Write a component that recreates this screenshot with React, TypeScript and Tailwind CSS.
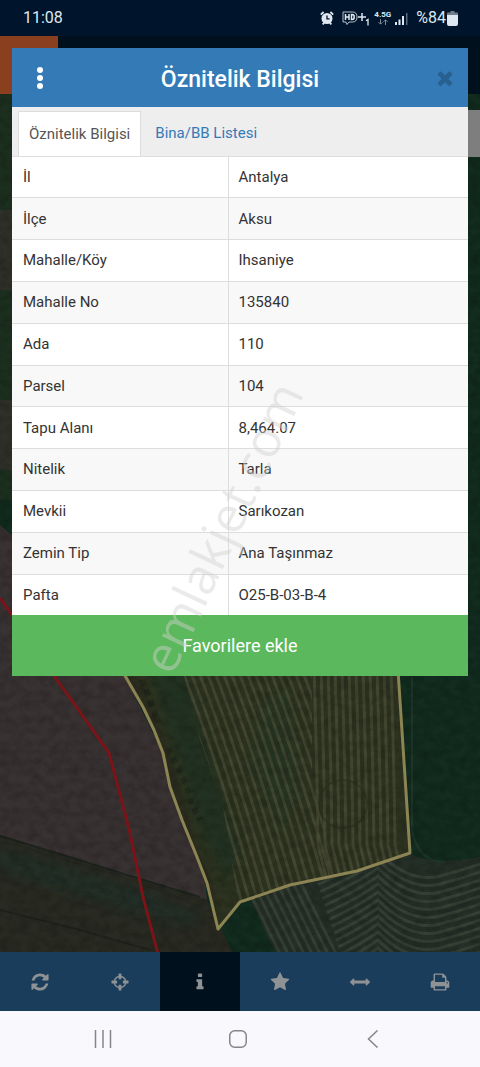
import { useState } from "react";
import { clsx } from "clsx";

type IconProps = { d: string; className?: string };

const ICONS = {
  refresh:
    "M1639 1056q0 5-1 7-64 268-268 434.5t-478 166.5q-146 0-282.5-55t-243.5-157l-129 129q-19 19-45 19t-45-19-19-45v-448q0-26 19-45t45-19h448q26 0 45 19t19 45-19 45l-137 137q71 66 161 102t187 36q134 0 250-65t186-179q11-17 53-117 8-23 30-23h192q13 0 22.5 9.5t9.5 22.5zm25-800v448q0 26-19 45t-45 19h-448q-26 0-45-19t-19-45 19-45l138-138q-148-137-349-137-134 0-250 65t-186 179q-11 17-53 117-8 23-30 23h-199q-13 0-22.5-9.5t-9.5-22.5v-7q65-268 270-434.5t480-166.5q146 0 284 55.5t245 156.5l130-129q19-19 45-19t45 19 19 45z",
  crosshairs:
    "M1325 1024h-109q-26 0-45-19t-19-45v-128q0-26 19-45t45-19h109q-32-108-112.5-188.5t-188.5-112.5v109q0 26-19 45t-45 19h-128q-26 0-45-19t-19-45v-109q-108 32-188.5 112.5t-112.5 188.5h109q26 0 45 19t19 45v128q0 26-19 45t-45 19h-109q32 108 112.5 188.5t188.5 112.5v-109q0-26 19-45t45-19h128q26 0 45 19t19 45v109q108-32 188.5-112.5t112.5-188.5zm339-192v128q0 26-19 45t-45 19h-143q-37 161-154.5 278.5t-278.5 154.5v143q0 26-19 45t-45 19h-128q-26 0-45-19t-19-45v-143q-161-37-278.5-154.5t-154.5-278.5h-143q-26 0-45-19t-19-45v-128q0-26 19-45t45-19h143q37-161 154.5-278.5t278.5-154.5v-143q0-26 19-45t45-19h128q26 0 45 19t19 45v143q161 37 278.5 154.5t154.5 278.5h143q26 0 45 19t19 45z",
  info: "M1216 1344v128q0 26-19 45t-45 19h-512q-26 0-45-19t-19-45v-128q0-26 19-45t45-19h64v-384h-64q-26 0-45-19t-19-45v-128q0-26 19-45t45-19h384q26 0 45 19t19 45v576h64q26 0 45 19t19 45zm-128-1152v192q0 26-19 45t-45 19h-256q-26 0-45-19t-19-45v-192q0-26 19-45t45-19h256q26 0 45 19t19 45z",
  star: "M1728 647q0 22-26 48l-363 354 86 500q1 7 1 20 0 21-10.5 35.5t-30.5 14.5q-19 0-40-12l-449-236-449 236q-22 12-40 12-21 0-31.5-14.5t-10.5-35.5q0-6 2-20l86-500-364-354q-25-27-25-48 0-37 56-46l502-73 225-455q19-41 49-41t49 41l225 455 502 73q56 9 56 46z",
  arrows:
    "M1792 896q0 26-19 45l-256 256q-19 19-45 19t-45-19-19-45v-128h-1024v128q0 26-19 45t-45 19-45-19l-256-256q-19-19-19-45t19-45l256-256q19-19 45-19t45 19 19 45v128h1024v-128q0-26 19-45t45-19 45 19l256 256q19 19 19 45z",
  print:
    "M448 1536h896v-256h-896v256zm0-640h896v-384h-160q-40 0-68-28t-28-68v-160h-640v640zm1152 64q0-26-19-45t-45-19-45 19-19 45 19 45 45 19 45-19 19-45zm128 0v416q0 13-9.5 22.5t-22.5 9.5h-224v160q0 40-28 68t-68 28h-960q-40 0-68-28t-28-68v-160h-224q-13 0-22.5-9.5t-9.5-22.5v-416q0-79 56.5-135.5t135.5-56.5h64v-544q0-40 28-68t68-28h672q40 0 88 20t76 48l152 152q28 28 48 76t20 88v256h64q79 0 135.5 56.5t56.5 135.5z",
  times:
    "M1490 1322q0 40-28 68l-136 136q-28 28-68 28t-68-28l-294-294-294 294q-28 28-68 28t-68-28l-136-136q-28-28-28-68t28-68l294-294-294-294q-28-28-28-68t28-68l136-136q28-28 68-28t68 28l294 294 294-294q28-28 68-28t68 28l136 136q28 28 28 68t-28 68l-294 294 294 294q28 28 28 68z",
};

const ROWS: [string, string][] = [
  ["İl", "Antalya"],
  ["İlçe", "Aksu"],
  ["Mahalle/Köy", "Ihsaniye"],
  ["Mahalle No", "135840"],
  ["Ada", "110"],
  ["Parsel", "104"],
  ["Tapu Alanı", "8,464.07"],
  ["Nitelik", "Tarla"],
  ["Mevkii", "Sarıkozan"],
  ["Zemin Tip", "Ana Taşınmaz"],
  ["Pafta", "O25-B-03-B-4"],
];

const TOOLS = [
  { id: "refresh", label: "Yenile", d: ICONS.refresh },
  { id: "locate", label: "Konumum", d: ICONS.crosshairs },
  { id: "info", label: "Bilgi", d: ICONS.info },
  { id: "favorites", label: "Favoriler", d: ICONS.star },
  { id: "measure", label: "Ölçüm", d: ICONS.arrows },
  { id: "print", label: "Yazdır", d: ICONS.print },
];

function Icon({ d, className }: IconProps) {
  return (
    <svg viewBox="0 0 1792 1792" fill="currentColor" className={className} aria-hidden="true">
      <path d={d} />
    </svg>
  );
}

function StatusBar() {
  return (
    <header className="flex h-9 items-center justify-between bg-[#00152b] pr-[22px] pl-[23px] text-[#dfe8f0]">
      <span className="text-base">11:08</span>
      <div className="flex items-center gap-1">
        <svg width="14" height="14" viewBox="0 0 14 14" aria-hidden="true">
          <circle cx="7" cy="7.5" r="5.5" fill="currentColor" />
          <path
            d="M.8 3.6 3.6 1M13.2 3.6 10.4 1M2.6 13.4l1.6-1.6M11.4 13.4l-1.6-1.6"
            stroke="currentColor"
            strokeWidth="1.8"
          />
          <path d="M7 4.4v3.4h2.6" fill="none" stroke="#00152b" strokeWidth="1.3" />
        </svg>
        <svg width="28" height="16" viewBox="0 0 28 16" className="ml-1" aria-hidden="true">
          <path
            d="M4 12H1V2h9.500q4.500 0 4.500 5t-4.500 5H7l-2 2.500z"
            fill="none"
            stroke="currentColor"
            strokeWidth="1"
            opacity=".8"
          />
          <g fill="none" stroke="currentColor" strokeWidth="1.5">
            <path d="M3.500 4v6M7 4v6M3.500 7H7M9.500 4.500v5h.7q2 0 2-2.500t-2-2.500z" />
            <path d="M20 3v8M16 7h8" />
            <path d="M24 10.800l2-1.300v6" strokeWidth="1.300" />
          </g>
        </svg>
        <div className="flex flex-col items-center">
          <span className="text-[8px] leading-[8px] font-bold">4.5G</span>
          <svg width="10" height="6" viewBox="0 0 10 6" className="opacity-60" aria-hidden="true">
            <path
              d="M2.500 0v5M.5 3.200l2 2 2-2M7.500 6V1M5.500 2.800l2-2 2 2"
              fill="none"
              stroke="currentColor"
              strokeWidth=".9"
            />
          </svg>
        </div>
        <svg width="13" height="13" viewBox="0 0 13 13" aria-hidden="true">
          <path d="M0 10h2v3H0zM3.500 7.500h2V13h-2zM7 4h2v9H7z" fill="currentColor" />
          <path d="M11 1h1.500v12H11z" fill="currentColor" opacity=".4" />
        </svg>
        <div className="ml-1 flex items-center gap-px">
          <span className="text-base">%84</span>
          <svg width="11" height="15" viewBox="0 0 11 15" aria-hidden="true">
            <path d="M3.500 0h4v1.500H10q1 0 1 1V4.500H0V2.500q0-1 1-1h2.500z" fill="currentColor" opacity=".5" />
            <path d="M0 4h11v9q0 2-2 2H2q-2 0-2-2z" fill="currentColor" />
          </svg>
        </div>
      </div>
    </header>
  );
}

/* Furrow lines of the parcel: the left half runs diagonally, the right half is nearly vertical. */
const DIAGONAL = Array.from({ length: 30 }, (_, i) => 90 + i * 8);
const VERTICAL = Array.from({ length: 12 }, (_, i) => 314 + i * 7);
const CURVED = Array.from({ length: 15 }, (_, i) => i * 8);
const LOWER = Array.from({ length: 8 }, (_, i) => 246 + i * 8);

const PARCEL =
  "M125 677 143 707 154 730 163 753 170 787 182 820 197 857 207 883 218 930 240 902 290 885 357 871 410 853 398 677 390 560 60 560z";

function SatelliteMap() {
  return (
    <svg
      viewBox="0 94 480 858"
      preserveAspectRatio="xMidYMax slice"
      className="absolute inset-0 size-full"
      aria-hidden="true"
    >
      <defs>
        <filter id="grain" x="0" y="0" width="100%" height="100%">
          <feTurbulence type="fractalNoise" baseFrequency=".1 .12" numOctaves="4" seed="7" />
          <feColorMatrix values="0 0 0 0 0  0 0 0 0 0  0 0 0 0 0  1.2 0 0 0 -.4" />
        </filter>
        <filter id="soft">
          <feGaussianBlur stdDeviation="5" />
        </filter>
        <clipPath id="parcel">
          <path d={PARCEL} />
        </clipPath>
        <clipPath id="diagonal">
          <path d="M180 660H312V780L330 853V900H238L222 800 200 740z" />
        </clipPath>
        <clipPath id="south">
          <path d="M250 899 290 885 357 871 410 853Q425 866 480 857V952H275z" />
        </clipPath>
        <clipPath id="south-east">
          <path d="M310 860H480V952H340z" />
        </clipPath>
      </defs>

      <path d="M0 94H480V952H0z" fill="#122c1f" />
      <path d="M0 94H12V500H0z" fill="#1d3020" />
      <path d="M0 210H12V290H0zM0 400H12V470H0z" fill="#30302a" />
      <path d="M0 525 40 560 125 677 163 753 205 880 207 900 130 878 0 836z" fill="#393232" />
      <path d="M0 836 130 878 207 900 232 952H0z" fill="#292b22" />
      <path d="M0 848 125 885 200 915 190 925 110 905 0 870z" fill="#202d25" filter="url(#soft)" />
      <path d="M0 836 60 854 130 876 200 897" fill="none" stroke="#1d231d" strokeWidth="2" />
      <path d="M0 910 80 930 150 950" fill="none" stroke="#20231c" strokeWidth="2" />

      <path d={PARCEL} fill="#2d3320" />
      <g clipPath="url(#parcel)">
        <path d="M150 670H185L210 760 240 850 228 880 205 840z" fill="#223320" filter="url(#soft)" />
        <path d="M125 677H140L165 740 195 840 222 910 205 890 170 780z" fill="#2b2d1f" />
        <path d="M260 700 290 690 300 790 280 830 250 770z" fill="#283520" filter="url(#soft)" />
        <g clipPath="url(#diagonal)" fill="none" stroke="#4d4f38" strokeWidth="3" opacity=".7">
          {DIAGONAL.map((x) => (
            <path key={x} d={`M${x} 660Q${x + 40} 760 ${x + 82} 910`} />
          ))}
        </g>
        <g fill="none" stroke="#4d4f38" strokeWidth="3" opacity=".7">
          {VERTICAL.map((x) => (
            <path key={x} d={`M${x} 670Q${x + 3} 760 ${x + 4} 845l10 40`} />
          ))}
        </g>
        <circle cx="343" cy="804" r="24" fill="none" stroke="#28301e" strokeWidth="2" opacity=".6" />
        <path
          d="M142 680 150 700 158 722M168 748 176 764 186 784 192 806 200 820"
          fill="none"
          stroke="#1b2017"
          strokeWidth="6"
          strokeDasharray="6 5"
          opacity=".5"
        />
      </g>

      <path d="M250 899 290 885 357 871 410 853Q425 866 480 857V952H275z" fill="#242f27" />
      <g clipPath="url(#south)" fill="none" stroke="#3f483d" strokeWidth="3" opacity=".7">
        <g clipPath="url(#south-east)">
          {CURVED.map((y) => (
            <path
              key={y}
              d={`M300 ${892 + y}Q350 ${872 + y} 378 ${852 + y}Q410 ${884 + y} 440 ${876 + y}T480 ${864 + y}`}
            />
          ))}
        </g>
        {LOWER.map((x) => (
          <path key={x} d={`M${x} 885 ${x + 38} 962`} />
        ))}
      </g>
      <path d="M412 677V830Q418 862 445 862" fill="none" stroke="#203629" strokeWidth="2" />

      <path d="M0 94H480V952H0z" filter="url(#grain)" opacity=".3" />

      <path
        d="M0 598 12 615 55 677 109 753 130 833 143 897 158 954"
        fill="none"
        stroke="#7b1418"
        strokeWidth="3"
      />
      <path
        d="M120 667 143 707 154 730 163 753 170 787 182 820 197 857 207 883 218 929 240 902 290 885 357 871 410 853 398 670"
        fill="none"
        stroke="#8c8453"
        strokeWidth="3"
        strokeLinejoin="round"
      />
    </svg>
  );
}

function AttributeDialog() {
  const [tab, setTab] = useState<"info" | "units">("info");
  const tabClass = (active: boolean) =>
    clsx(
      "px-[10px] text-[15px]",
      active ? "border-x border-t border-[#ddd] bg-white text-[#555]" : "ml-1 text-[#337ab7]",
    );

  return (
    <section role="dialog" aria-label="Öznitelik Bilgisi" className="absolute inset-x-3 top-12 bg-white">
      <div className="flex h-[59px] items-center justify-between bg-[#337ab7] px-3 text-white">
        <button type="button" aria-label="Menü" className="flex w-8 justify-center">
          <svg width="8" height="24" viewBox="0 0 8 24" fill="currentColor" aria-hidden="true">
            <circle cx="4" cy="4" r="3" />
            <circle cx="4" cy="12" r="3" />
            <circle cx="4" cy="20" r="3" />
          </svg>
        </button>
        <h1 className="pt-1 text-[23px] leading-8 font-medium">Öznitelik Bilgisi</h1>
        <button type="button" aria-label="Kapat" className="flex w-8 justify-end text-[#28608f]">
          <Icon d={ICONS.times} className="size-[22px]" />
        </button>
      </div>

      <div role="tablist" className="flex h-[50px] border-b border-[#ddd] bg-[#eee] pt-1 pl-[6px]">
        <button
          type="button"
          role="tab"
          aria-selected={tab === "info"}
          onClick={() => setTab("info")}
          className={tabClass(tab === "info")}
        >
          Öznitelik Bilgisi
        </button>
        <button
          type="button"
          role="tab"
          aria-selected={tab === "units"}
          onClick={() => setTab("units")}
          className={tabClass(tab === "units")}
        >
          Bina/BB Listesi
        </button>
      </div>

      <table className="h-[458px] w-full table-fixed border-collapse text-left text-[15px] text-[#333]">
        <colgroup>
          <col className="w-[216px]" />
          <col />
        </colgroup>
        <tbody>
          {ROWS.map(([label, value]) => (
            <tr key={label} className="border-t border-[#ddd] first:border-t-0 even:bg-[#f8f8f8]">
              <th scope="row" className="border-r border-[#ddd] px-[11px] font-normal">
                {label}
              </th>
              <td className="px-[10px]">{value}</td>
            </tr>
          ))}
        </tbody>
      </table>

      <button type="button" className="h-[61px] w-full bg-[#5cb85c] text-lg text-white">
        Favorilere ekle
      </button>

      <div className="pointer-events-none absolute inset-0 flex items-end justify-center">
        <span className="mr-9 mb-[122px] -rotate-65 font-['Open_Sans',sans-serif] text-[50px] leading-[54px] text-[#d0d0d0]/45">
          emlakjet.com
        </span>
      </div>
    </section>
  );
}

export default function App() {
  const [activeTool, setActiveTool] = useState("info");

  return (
    <div className="relative flex min-h-screen flex-col bg-[#000f1c] font-[Roboto,sans-serif]">
      <StatusBar />
      <div className="h-[58px] bg-[#00101c]">
        <div className="h-full w-[58px] bg-[#8a401f]" />
      </div>

      <main className="relative flex-1 overflow-hidden">
        <SatelliteMap />
        <div className="absolute top-4 right-0 h-[47px] w-14 bg-[#7e7e7e]" />
      </main>

      <nav aria-label="Harita araçları" className="flex h-[59px] bg-[#1a3d5c]">
        {TOOLS.map((tool) => (
          <button
            key={tool.id}
            type="button"
            aria-label={tool.label}
            aria-pressed={activeTool === tool.id}
            onClick={() => setActiveTool(tool.id)}
            className={clsx(
              "flex flex-1 items-center justify-center text-[#8f9295]",
              activeTool === tool.id && "bg-[#00101c]",
            )}
          >
            <Icon d={tool.d} className="size-5" />
          </button>
        ))}
      </nav>

      <nav aria-label="Sistem" className="flex h-14 justify-center bg-[#f9f8fd] pr-[5px] text-[#85858a]">
        <button type="button" aria-label="Son uygulamalar" className="flex w-[135px] items-center justify-center">
          <svg width="18" height="18" viewBox="0 0 18 18" stroke="currentColor" strokeWidth="1.5" aria-hidden="true">
            <path d="M1.500 0v18M9 0v18M16.500 0v18" />
          </svg>
        </button>
        <button type="button" aria-label="Ana ekran" className="flex w-[135px] items-center justify-center">
          <svg width="18" height="18" viewBox="0 0 18 18" fill="none" stroke="currentColor" strokeWidth="1.5" aria-hidden="true">
            <rect x=".75" y=".75" width="16.5" height="16.5" rx="5" />
          </svg>
        </button>
        <button type="button" aria-label="Geri" className="flex w-[135px] items-center justify-center">
          <svg width="18" height="18" viewBox="0 0 18 18" fill="none" stroke="currentColor" strokeWidth="1.5" aria-hidden="true">
            <path d="M13.500.5 4.500 9l9 8.500" />
          </svg>
        </button>
      </nav>

      <AttributeDialog />
    </div>
  );
}
